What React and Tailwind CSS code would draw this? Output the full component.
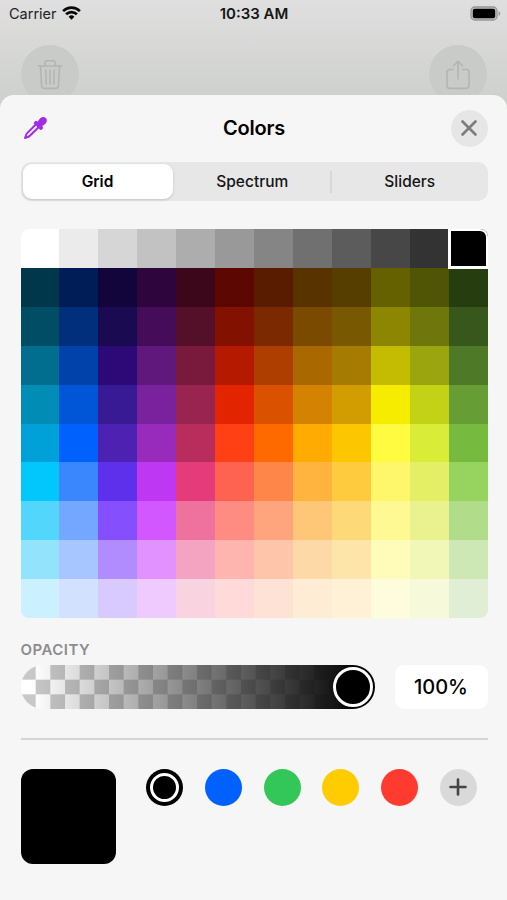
import React from "react";

const GRID = [
  ["#ffffff", "#ebebeb", "#d6d6d6", "#c2c2c2", "#adadad", "#999999", "#858585", "#707070", "#5c5c5c", "#474747", "#333333", "#000000"],
  ["#00374a", "#011d57", "#11053b", "#2e063d", "#3c071b", "#5c0701", "#5a1c00", "#583300", "#563d00", "#666100", "#4f5504", "#263e0f"],
  ["#004d65", "#012f7b", "#1a0a52", "#450d59", "#551029", "#831100", "#7b2900", "#7a4a00", "#785800", "#8d8602", "#6f760a", "#38571a"],
  ["#016e8f", "#0042a9", "#2c0977", "#61187c", "#791a3d", "#b51a00", "#ad3e00", "#a96800", "#a67b01", "#c4bc00", "#9ba50e", "#4e7a27"],
  ["#008cb4", "#0056d6", "#371a94", "#7a219e", "#99244f", "#e22400", "#da5100", "#d38301", "#d19d01", "#f5ec00", "#c3d117", "#669d34"],
  ["#00a1d8", "#0061fd", "#4d22b2", "#982abc", "#b92d5d", "#ff4015", "#ff6a00", "#ffab01", "#fcc700", "#fefb41", "#d9ec37", "#76bb40"],
  ["#01c7fc", "#3a87fd", "#5e30eb", "#be38f3", "#e63b7a", "#fe6250", "#fe8648", "#feb43f", "#fecb3e", "#fff76b", "#e4ef65", "#96d35f"],
  ["#52d6fc", "#74a7ff", "#864ffd", "#d357fe", "#ee719e", "#ff8c82", "#fea57d", "#fec777", "#fed977", "#fff994", "#eaf28f", "#b1dd8b"],
  ["#93e3fc", "#a7c6ff", "#b18cfe", "#e292fe", "#f4a4c0", "#ffb5af", "#ffc5ab", "#fed9a8", "#fde4a8", "#fffbb9", "#f1f7b7", "#cde8b5"],
  ["#cbf0ff", "#d2e2fe", "#d8c9fe", "#efcafe", "#f9d3e0", "#ffdad8", "#ffe2d6", "#feecd4", "#fef1d5", "#fefcdd", "#f6fadb", "#dfeed4"],
];

function Wifi() {
  return (
    <svg className="ml-[5px] h-[14px] w-[19px] -translate-y-px" viewBox="0 0 19 14" fill="none" stroke="#080808" strokeWidth="2.7">
      <path d="M1.1 5.1a12 12 0 0 1 16.8 0" />
      <path d="M4.1 8.3a7.7 7.7 0 0 1 10.8 0" />
      <path d="M9.5 13.7 6.6 10.8a4.1 4.1 0 0 1 5.8 0z" fill="#080808" stroke="none" />
    </svg>
  );
}

function Battery() {
  return (
    <svg className="h-[15px] w-[31px] -translate-y-px" viewBox="0 0 31 15">
      <rect x="1" y="1" width="26" height="13" rx="3.8" fill="#c4c4c3" stroke="#969696" strokeWidth="1.3" />
      <rect x="2.8" y="2.8" width="22.4" height="9.4" rx="2" fill="#000" />
      <path d="M28.6 5.2c2.2.8 2.2 3.8 0 4.6z" fill="#969696" />
    </svg>
  );
}

function Trash() {
  return (
    <svg className="h-[32px] w-[26px] translate-y-px" viewBox="0 0 26 32" fill="none" stroke="#b3b5b3" strokeWidth="1.6" strokeLinecap="round" strokeLinejoin="round">
      <path d="M1.3 7h23.4M8 7V3.4Q8 1.8 9.6 1.8h6.8Q18 1.8 18 3.4V7" />
      <path d="m3.5 7 1.1 19.8q.2 2.6 2.7 2.6h11.4q2.5 0 2.7-2.6L22.5 7" />
      <path d="m8.8 11 .4 14M13 11v14M17.2 11l-.4 14" />
    </svg>
  );
}

function Share() {
  return (
    <svg className="h-[32px] w-[26px] translate-y-px" viewBox="0 0 26 32" fill="none" stroke="#b3b5b3" strokeWidth="1.6" strokeLinecap="round" strokeLinejoin="round">
      <path d="M8.5 10.5H4.8q-2.8 0-2.8 2.8v13.3q0 2.8 2.8 2.8h16.4q2.8 0 2.8-2.8V13.3q0-2.8-2.8-2.8h-3.7" />
      <path d="M13 20V2.5M8.5 6.8 13 2.3l4.5 4.5" />
    </svg>
  );
}

function Eyedropper() {
  return (
    <svg className="h-[24px] w-[24px]" viewBox="0 0 24 24" fill="none">
      <path d="M13.3 8 4.2 17.1q-.9.9-1.2 2.2L2 22l2.7-1q1.3-.3 2.2-1.2l9.1-9.1" stroke="#a32be8" strokeWidth="2" strokeLinejoin="round" />
      <path d="m11 6.4 1.3-1.3q.7-.6 1.4 0l.8.7 2-2.7c1.6-2.2 4.5-2.7 6.3-1.1 1.7 1.8 1.2 4.7-1 6.3l-2.7 2 .7.8q.6.7 0 1.4l-1.3 1.3q-.7.6-1.4 0L11 7.8q-.7-.7 0-1.4z" fill="#a32be8" />
    </svg>
  );
}

const Tab = ({ children }) => (
  <div className="flex flex-1 items-center justify-center text-[15.5px] font-medium text-[#151515]">{children}</div>
);

export default function App() {
  return (
    <div className="flex h-[900px] w-[507px] flex-col overflow-hidden bg-[linear-gradient(#dfdfdf_0px,#cfd1ce_95px)] font-['Inter','Liberation_Sans',sans-serif] text-black">
      <header className="h-[94.5px] shrink-0">
        <div className="grid h-[28px] grid-cols-3 items-center pr-[6px] pl-[9px]">
          <div className="flex items-center text-[14.5px] text-[#222]">
            Carrier
            <Wifi />
          </div>
          <div className="pr-[2px] text-center text-[15px] font-semibold whitespace-nowrap text-[#151515]">10:33 AM</div>
          <div className="flex justify-end">
            <Battery />
          </div>
        </div>
        <div className="flex justify-between pt-[16.5px] pr-[20px] pl-[20.5px]">
          <div className="flex size-[58.5px] items-center justify-center rounded-full bg-[#c9cbc9]">
            <Trash />
          </div>
          <div className="flex size-[58.5px] items-center justify-center rounded-full bg-[#c9cbc9]">
            <Share />
          </div>
        </div>
      </header>

      <main className="flex-1 rounded-t-[14px] bg-[#f6f6f6] pr-[19.5px] pl-[20.5px]">
        <div className="flex h-[67.5px] items-center justify-between">
          <div className="w-[37px] pl-[2px]">
            <Eyedropper />
          </div>
          <h1 className="text-[20px] font-semibold tracking-[-0.2px]">Colors</h1>
          <button className="flex size-[37px] items-center justify-center rounded-full bg-[#e6e6e6]">
            <svg className="size-[16px]" viewBox="0 0 16 16" stroke="#7c7c7c" strokeWidth="2.6" strokeLinecap="round">
              <path d="m1.5 1.5 13 13M14.5 1.5l-13 13" />
            </svg>
          </button>
        </div>

        <div className="flex h-[39px] items-stretch rounded-[10px] bg-[#e7e7e7] py-[2px] pl-[2px]">
          <div className="mr-[2px] flex w-[150px] items-center justify-center rounded-[9px] bg-white text-[15.5px] font-semibold shadow-[0_1px_3px_rgba(0,0,0,0.16)]">Grid</div>
          <Tab>Spectrum</Tab>
          <div className="my-[6.5px] w-[2px] bg-[#d8d8d8]" />
          <Tab>Sliders</Tab>
        </div>

        <div className="relative mt-[28px] grid h-[389px] grid-cols-12 grid-rows-10 overflow-hidden rounded-[8px]">
          {GRID.flat().map((c, i) => (
            <div key={i} style={{ backgroundColor: c }} />
          ))}
          <div className="absolute -top-px -right-px h-[41px] w-[41px] rounded-tr-[9px] border-[3px] border-white" />
        </div>

        <div className="mt-[21.5px] h-[20px] text-[15px] leading-[20px] font-semibold tracking-[0.5px] text-[#8c8c8f]">OPACITY</div>
        <div className="mt-[5.5px] flex h-[44px] justify-between">
          <div className="w-[354.5px] overflow-hidden rounded-full bg-[conic-gradient(#fff_25%,#c8c8c8_0_50%,#fff_0_75%,#c8c8c8_0)] bg-[length:29.34px_29.34px]">
            <div className="flex size-full items-center justify-end bg-[linear-gradient(90deg,rgba(90,90,90,0)_12px,rgba(72,72,72,0.6)_154px,rgba(37,37,37,0.83)_247px,#000_340px)] pr-[2px]">
              <div className="size-[40px] rounded-full border-[3.5px] border-white bg-black" />
            </div>
          </div>
          <div className="flex w-[93px] items-center justify-center rounded-[9px] bg-white text-[20px] font-medium">100%</div>
        </div>

        <div className="mt-[29px] h-[2px] bg-[#d4d4d4]" />

        <div className="mt-[28.5px] flex">
          <div className="size-[95.5px] rounded-[12px] bg-black" />
          <div className="ml-[30.3px] flex gap-[21.7px]">
            <div className="flex size-[37px] items-center justify-center rounded-full bg-black">
              <div className="size-[29px] rounded-full border-[3.5px] border-white" />
            </div>
            <div className="size-[37px] rounded-full bg-[#0061fe]" />
            <div className="size-[37px] rounded-full bg-[#33c75a]" />
            <div className="size-[37px] rounded-full bg-[#ffcc02]" />
            <div className="size-[37px] rounded-full bg-[#ff3b30]" />
            <div className="flex size-[37px] items-center justify-center rounded-full bg-[#d9d9d9]">
              <svg className="size-[18px]" viewBox="0 0 18 18" stroke="#444" strokeWidth="2.6" strokeLinecap="round">
                <path d="M1.5 9h15M9 1.5v15" />
              </svg>
            </div>
          </div>
        </div>
      </main>
    </div>
  );
}
